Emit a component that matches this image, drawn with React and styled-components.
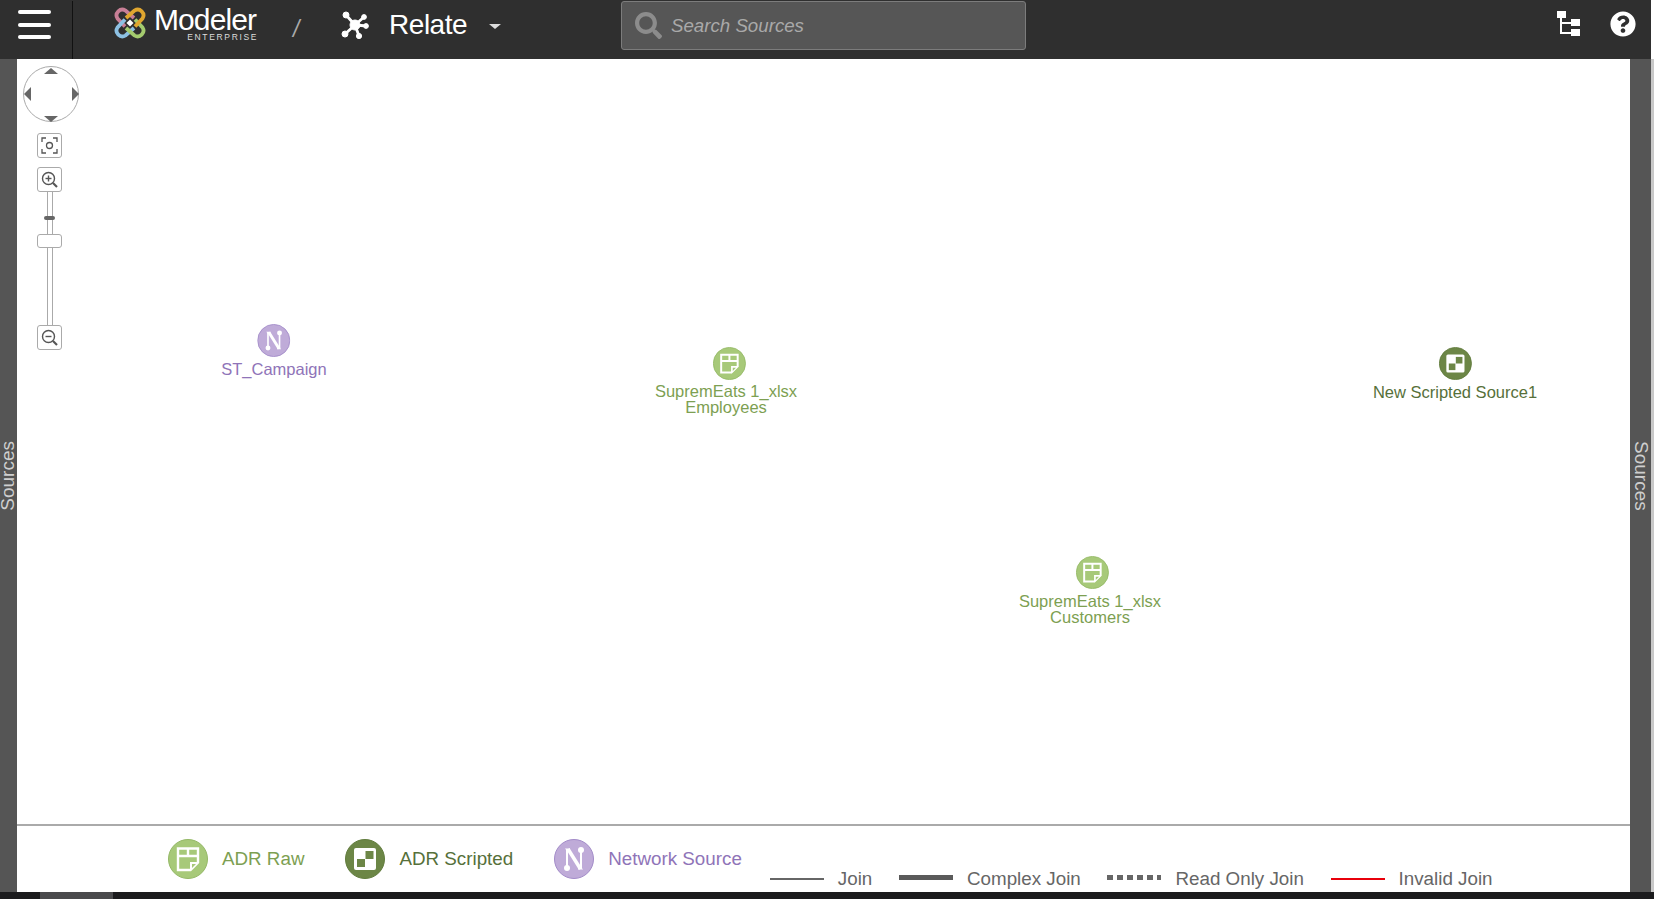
import React from 'react'
import styled, { createGlobalStyle } from 'styled-components'
import { FaQuestionCircle, FaSearch } from 'react-icons/fa'

const GlobalStyle = createGlobalStyle`
  html, body, #root {
    margin: 0;
    height: 100%;
    overflow: hidden;
  }
  body {
    font-family: 'Liberation Sans', Arial, sans-serif;
    background: #fff;
  }
  * {
    box-sizing: border-box;
  }
`
const Page = styled.div`
  height: 899px;
  display: flex;
  flex-direction: column;
`
const Top = styled.div`
  flex: 1;
  display: flex;
  min-height: 0;
`
const Main = styled.div`
  flex: 1;
  display: flex;
  flex-direction: column;
  min-width: 0;
`
const Edge = styled.div`
  width: 3px;
  margin-top: 59px;
  background: #c9c9c9;
`
const BottomBar = styled.div`
  height: 7px;
  background: #1b1b1d;
  padding-left: 40px;
`
const Thumb = styled.div`
  width: 73px;
  height: 7px;
  background: #4a4a4c;
`
const Header = styled.header`
  height: 59px;
  flex: none;
  display: flex;
  align-items: center;
  background: #2f2f2f;
  position: relative;
`
const Burger = styled.button`
  width: 73px;
  height: 58px;
  padding: 0 0 10px 18px;
  background: none;
  border: 0;
  border-right: 1px solid #111;
  display: flex;
  flex-direction: column;
  justify-content: center;
  gap: 8.5px;
`
const BurgerBar = styled.span`
  display: block;
  width: 33px;
  height: 4px;
  border-radius: 2px;
  background: #fff;
`
const Brand = styled.div`
  display: flex;
  align-items: flex-start;
  gap: 7px;
  margin: 0 0 12px 40px;
`
const BrandText = styled.div`
  display: flex;
  flex-direction: column;
  align-items: flex-end;
  color: #fff;
`
const BrandName = styled.span`
  font-size: 30px;
  line-height: 27px;
  letter-spacing: -0.9px;
  margin-right: 1px;
`
const BrandSub = styled.span`
  font-size: 8.5px;
  line-height: 9px;
  letter-spacing: 1.65px;
  margin-right: -1px;
  color: #ddd;
`
const Slash = styled.span`
  margin: 0 0 0 36px;
  width: 10px;
  font-size: 23px;
  font-style: italic;
  color: #aaa;
`
const Crumb = styled.div`
  display: flex;
  align-items: center;
  margin-left: 38px;
  margin-bottom: 10px;
  color: #fff;
`
const CrumbLabel = styled.span`
  font-size: 28px;
  letter-spacing: -0.5px;
  margin-left: 20px;
`
const Caret = styled.span`
  width: 0;
  height: 0;
  margin-left: 22px;
  margin-top: 3px;
  border-left: 6px solid transparent;
  border-right: 6px solid transparent;
  border-top: 5px solid #ddd;
`
const Search = styled.div`
  position: absolute;
  left: 621px;
  top: 1px;
  width: 405px;
  height: 49px;
  display: flex;
  align-items: center;
  gap: 9px;
  padding-left: 13px;
  background: #565656;
  border: 1px solid #7c7c7c;
  border-radius: 3px;
  color: #8c8c8c;
`
const SearchText = styled.span`
  font-size: 18.7px;
  font-style: italic;
  color: #a9a9a9;
`
const HeaderTools = styled.div`
  margin-left: auto;
  display: flex;
  align-items: center;
  gap: 30px;
  padding-right: 15px;
  margin-bottom: 12px;
  color: #fff;
`
const Body = styled.div`
  flex: 1;
  display: flex;
  min-height: 0;
`
const Rail = styled.aside`
  width: ${(props) => props.$width}px;
  flex: none;
  display: flex;
  align-items: center;
  justify-content: center;
  background: #555;
  color: #cfcfcf;
  font-size: 19px;
`
const RailText = styled.span`
  writing-mode: vertical-rl;
  line-height: 17px;
  margin-left: ${(props) => (props.$flip ? 0 : 2)}px;
  margin-right: ${(props) => (props.$flip ? 2 : 0)}px;
  transform: ${(props) => (props.$flip ? 'rotate(180deg)' : 'none')};
`
const Workspace = styled.div`
  flex: 1;
  display: flex;
  flex-direction: column;
  min-width: 0;
`
const Stage = styled.main`
  flex: 1;
  position: relative;
  background: #fff;
`
const Navigator = styled.div`
  position: absolute;
  left: 6px;
  top: 7px;
  display: flex;
  flex-direction: column;
  align-items: center;
  width: 53px;
`
const Pad = styled.div`
  width: 56px;
  height: 56px;
  flex: none;
  border: 1px solid #aaa;
  border-radius: 50%;
  position: relative;
  margin: 0 0 11px 2px;
`
const Arrow = styled.span`
  position: absolute;
  width: 0;
  height: 0;
  ${(props) => props.$dir === 'up' && `
    left: 20px; top: 1px;
    border-left: 7px solid transparent;
    border-right: 7px solid transparent;
    border-bottom: 6px solid #666;
  `}
  ${(props) => props.$dir === 'down' && `
    left: 20px; bottom: -1px;
    border-left: 7px solid transparent;
    border-right: 7px solid transparent;
    border-top: 6px solid #666;
  `}
  ${(props) => props.$dir === 'left' && `
    left: 0; top: 20px;
    border-top: 7px solid transparent;
    border-bottom: 7px solid transparent;
    border-right: 7px solid #666;
  `}
  ${(props) => props.$dir === 'right' && `
    right: -1px; top: 20px;
    border-top: 7px solid transparent;
    border-bottom: 7px solid transparent;
    border-left: 7px solid #666;
  `}
`
const ToolButton = styled.button`
  width: 25px;
  height: 25px;
  padding: 0;
  flex: none;
  display: flex;
  align-items: center;
  justify-content: center;
  background: #fff;
  border: 1px solid #aaa;
  border-radius: 3px;
  margin-bottom: ${(props) => props.$gap || 0}px;
`
const Track = styled.div`
  width: 6px;
  height: 133px;
  border-left: 1px solid #aaa;
  border-right: 1px solid #aaa;
  position: relative;
  display: flex;
  justify-content: center;
`
const Tick = styled.span`
  position: absolute;
  top: 24px;
  width: 11px;
  height: 4px;
  border-radius: 2px;
  background: #666;
`
const Handle = styled.span`
  position: absolute;
  top: 42px;
  width: 25px;
  height: 14px;
  background: #fff;
  border: 1px solid #aaa;
  border-radius: 3px;
`
const Node = styled.div`
  position: absolute;
  left: ${(props) => props.$x}px;
  top: ${(props) => props.$y}px;
  transform: translateX(-50%);
  display: flex;
  flex-direction: column;
  align-items: center;
  font-size: 16.5px;
  line-height: 16px;
  white-space: nowrap;
  text-align: center;
  color: ${(props) => props.$color};
`
const NodeIcon = styled.span`
  display: flex;
  margin-bottom: ${(props) => props.$gap}px;
  margin-left: ${(props) => props.$shift || 0}px;
`
const Legend = styled.footer`
  height: 68px;
  flex: none;
  display: flex;
  border-top: 2px solid #aaa;
  background: #fff;
  padding-left: 151px;
  font-size: 18.8px;
`
const Kinds = styled.div`
  display: flex;
  gap: 41px;
  height: 100%;
  align-items: center;
  padding-bottom: 1px;
`
const Kind = styled.div`
  display: flex;
  align-items: center;
  gap: 14px;
  color: ${(props) => props.$color};
`
const Joins = styled.div`
  display: flex;
  margin-left: 28px;
  align-items: flex-end;
  gap: 26.7px;
  padding-bottom: 2px;
  height: 100%;
  color: #666;
`
const JoinItem = styled.div`
  display: flex;
  align-items: center;
  gap: 14px;
`
const JoinLine = styled.span`
  width: 54px;
  height: 2px;
  background: ${(props) => props.$color || '#666'};
`
const ThickLine = styled.span`
  width: 54px;
  height: 5px;
  margin-top: -4px;
  background: ${(props) => (props.$dashed ? 'repeating-linear-gradient(90deg, #666 0 6px, transparent 6px 10px)' : '#5a5a5a')};
`

function LogoMark() {
  return (
    <svg width="34" height="34" viewBox="0 0 34 34" fill="none" strokeWidth="3.800">
      <path d="M21 12 12.500 4.500A5.800 5.800 0 0 0 4.500 12.500L12 20.500" stroke="#c87f96" />
      <path d="M21 22 12.500 29.500A5.800 5.800 0 0 1 4.500 21.500L12 13.500" stroke="#8dc1e3" />
      <path d="M13 22 21.500 29.500A5.800 5.800 0 0 0 29.500 21.500L22 13.500" stroke="#a4cb6e" />
      <path d="M13 12 21.500 4.500A5.800 5.800 0 0 1 29.500 12.500L22 20.500" stroke="#e0a62f" />
      <rect x="14.500" y="14.500" width="5" height="5" fill="#fff" transform="rotate(45 17 17)" />
    </svg>
  )
}

function RelateIcon() {
  return (
    <svg width="28" height="28" viewBox="0 0 28 28" fill="#fff" stroke="#fff">
      <path d="M14 14 5 4M14 14 23 6M14 14 26 15M14 14 18 25M14 14 4 23" strokeWidth="2.800" />
      <circle cx="14" cy="14" r="5" />
      <circle cx="5" cy="4" r="3" />
      <circle cx="23" cy="6" r="2.400" />
      <circle cx="25" cy="15" r="2.400" />
      <circle cx="18" cy="25" r="2.600" />
      <circle cx="4" cy="23" r="3" />
    </svg>
  )
}

function TreeIcon() {
  return (
    <svg width="23" height="26" viewBox="0 1 23 26" fill="#fff">
      <rect x="0" y="0" width="9" height="8" />
      <rect x="14" y="9" width="9" height="7" />
      <rect x="14" y="19" width="9" height="7" />
      <path d="M3 8h2v4h9v2H5v8h9v2H3z" />
    </svg>
  )
}

function RawIcon({ size }) {
  return (
    <svg width={size} height={size} viewBox="0 0 40 40">
      <circle cx="20" cy="20" r="19.500" fill="#a7c979" stroke="#94b866" />
      <path d="M10 9.500h20v14l-7.500 7.500H10zM10 17h20M20 9.500V17" fill="none" stroke="#fff" strokeWidth="2.400" />
      <path d="M31 23h-9v9z" fill="#fff" />
      <path d="M28 25h-4v4z" fill="#a7c979" />
    </svg>
  )
}

function ScriptedIcon({ size }) {
  return (
    <svg width={size} height={size} viewBox="0 0 40 40">
      <circle cx="20" cy="20" r="19.500" fill="#6c8646" stroke="#617c3d" />
      <rect x="9" y="9" width="22" height="22" rx="2" fill="#fff" />
      <rect x="20.500" y="12" width="8" height="8" fill="#6c8646" />
      <rect x="12" y="20" width="8" height="8" fill="#6c8646" />
    </svg>
  )
}

function NetworkIcon({ size }) {
  return (
    <svg width={size} height={size} viewBox="0 0 40 40">
      <circle cx="20" cy="20" r="19.500" fill="#bfabd8" stroke="#a28bc8" />
      <path d="M13 29V11M27 29V11" fill="none" stroke="#fff" strokeWidth="2" />
      <path d="M14 10 26.500 30" fill="none" stroke="#fff" strokeWidth="3.600" />
      <circle cx="13" cy="29" r="3" fill="#fff" />
      <circle cx="27" cy="11" r="3" fill="#fff" />
      <path d="M11 9.500h5v2.500h-3z" fill="#fff" />
      <path d="M29 30.500h-5V28h3z" fill="#fff" />
    </svg>
  )
}

function FitIcon() {
  return (
    <svg width="17" height="17" viewBox="0 0 17 17" fill="none" stroke="#555" strokeWidth="1.300">
      <path d="M1 5V1h4M12 1h4v4M16 12v4h-4M5 16H1v-4" />
      <circle cx="8.500" cy="8.500" r="3" />
    </svg>
  )
}

function ZoomIcon({ plus }) {
  return (
    <svg width="17" height="17" viewBox="0 0 17 17" fill="none" stroke="#555" strokeWidth="1.400">
      <circle cx="7.500" cy="7.500" r="6" />
      <path d="M12 12l4 4" strokeWidth="2.200" />
      <path d="M4.500 7.500h6" />
      {plus && <path d="M7.500 4.500v6" />}
    </svg>
  )
}

const NODES = [
  { id: 'campaign', x: 257, y: 265, gap: 4, color: '#8f74b8', Icon: NetworkIcon, lines: ['ST_Campaign'] },
  { id: 'employees', x: 709, y: 288, gap: 3, shift: 6, color: '#7d9f52', Icon: RawIcon, lines: ['SupremEats 1_xlsx', 'Employees'] },
  { id: 'scripted', x: 1438, y: 288, gap: 4, color: '#56703a', Icon: ScriptedIcon, lines: ['New Scripted Source1'] },
  { id: 'customers', x: 1073, y: 497, gap: 4, shift: 4, color: '#7d9f52', Icon: RawIcon, lines: ['SupremEats 1_xlsx', 'Customers'] },
]

function App() {
  return (
    <Page>
      <GlobalStyle />
      <Top>
        <Main>
          <Header>
            <Burger aria-label="menu">
              <BurgerBar />
              <BurgerBar />
              <BurgerBar />
            </Burger>
            <Brand>
              <LogoMark />
              <BrandText>
                <BrandName>Modeler</BrandName>
                <BrandSub>ENTERPRISE</BrandSub>
              </BrandText>
            </Brand>
            <Slash>/</Slash>
            <Crumb>
              <RelateIcon />
              <CrumbLabel>Relate</CrumbLabel>
              <Caret />
            </Crumb>
            <Search>
              <FaSearch size={27} />
              <SearchText>Search Sources</SearchText>
            </Search>
            <HeaderTools>
              <TreeIcon />
              <FaQuestionCircle size={26} />
            </HeaderTools>
          </Header>
          <Body>
            <Rail $width={17}>
              <RailText $flip>Sources</RailText>
            </Rail>
            <Workspace>
              <Stage>
                <Navigator>
                  <Pad>
                    <Arrow $dir="up" />
                    <Arrow $dir="down" />
                    <Arrow $dir="left" />
                    <Arrow $dir="right" />
                  </Pad>
                  <ToolButton $gap={9}>
                    <FitIcon />
                  </ToolButton>
                  <ToolButton>
                    <ZoomIcon plus />
                  </ToolButton>
                  <Track>
                    <Tick />
                    <Handle />
                  </Track>
                  <ToolButton>
                    <ZoomIcon />
                  </ToolButton>
                </Navigator>
                {NODES.map(({ id, x, y, gap, shift, color, Icon, lines }) => (
                  <Node key={id} $x={x} $y={y} $color={color}>
                    <NodeIcon $gap={gap} $shift={shift}>
                      <Icon size={33} />
                    </NodeIcon>
                    {lines.map((line) => (
                      <span key={line}>{line}</span>
                    ))}
                  </Node>
                ))}
              </Stage>
              <Legend>
                <Kinds>
                  <Kind $color="#7d9f52">
                    <RawIcon size={40} />
                    ADR Raw
                  </Kind>
                  <Kind $color="#56703a">
                    <ScriptedIcon size={40} />
                    ADR Scripted
                  </Kind>
                  <Kind $color="#8f74b8">
                    <NetworkIcon size={40} />
                    Network Source
                  </Kind>
                </Kinds>
                <Joins>
                  <JoinItem>
                    <JoinLine />
                    Join
                  </JoinItem>
                  <JoinItem>
                    <ThickLine />
                    Complex Join
                  </JoinItem>
                  <JoinItem>
                    <ThickLine $dashed />
                    Read Only Join
                  </JoinItem>
                  <JoinItem>
                    <JoinLine $color="#e8000b" />
                    Invalid Join
                  </JoinItem>
                </Joins>
              </Legend>
            </Workspace>
            <Rail $width={21}>
              <RailText>Sources</RailText>
            </Rail>
          </Body>
        </Main>
        <Edge />
      </Top>
      <BottomBar>
        <Thumb />
      </BottomBar>
    </Page>
  )
}

export default App
